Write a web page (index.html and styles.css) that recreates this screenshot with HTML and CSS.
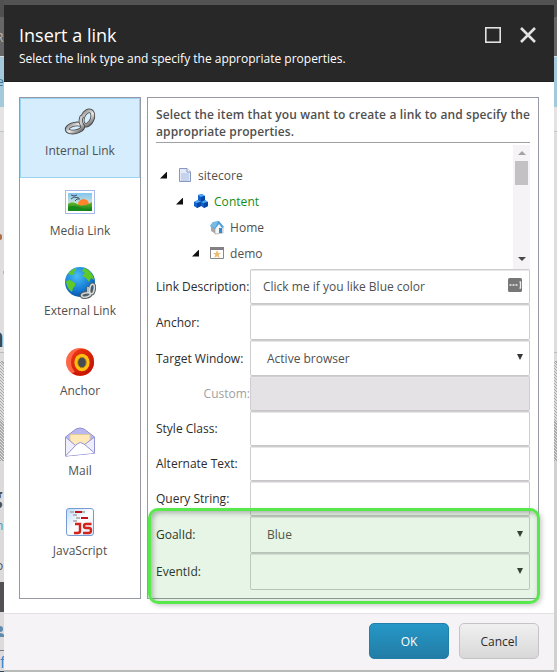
FILE: index.html
```html
<!DOCTYPE html>
<html lang="en">
<head>
<meta charset="utf-8">
<title>Insert a link</title>
<link rel="stylesheet" href="styles.css">
</head>
<body>
<div class="page">
  <div class="edge edge-left">
    <div class="e-top"></div>
    <div class="e-nav"><span>R</span></div>
    <div class="e-blue"><span>e</span></div>
    <div class="e-plain"></div>
    <div class="e-main"><i class="dot"></i><i class="dash"></i><b>n</b></div>
    <div class="e-hatch"></div>
    <div class="e-copy"><b>g</b><span class="lnk">n</span><span>o</span></div>
    <div class="e-dark"></div>
    <div class="e-user"><svg width="6" height="12" viewBox="0 0 6 12"><circle cx="0" cy="3" r="3"/><path d="M0 7Q4 7 4.500 10V11H0Z"/></svg></div>
    <div class="e-foot">f</div>
  </div>

  <div class="dialog">
    <header class="head">
      <div>
        <h1>Insert a link</h1>
        <p>Select the link type and specify the appropriate properties.</p>
      </div>
      <svg class="winbtns" width="52" height="16" viewBox="0 0 52 16" fill="none" stroke="#e2e2e2">
        <rect x=".8" y=".8" width="14.400" height="14.400" stroke-width="1.600"/>
        <path d="M36 1L50 15M50 1L36 15" stroke-width="2.600"/>
      </svg>
    </header>

    <main class="body">
      <nav class="types">
        <div class="type active">
          <svg width="32" height="32" viewBox="0 0 32 32">
            <defs><linearGradient id="steel" x1="0" y1="0" x2="1" y2="1"><stop offset="0" stop-color="#8a8a8a"/><stop offset=".45" stop-color="#ededed"/><stop offset="1" stop-color="#606060"/></linearGradient></defs>
            <g fill="none">
              <ellipse cx="23.500" cy="11" rx="4.800" ry="7.600" transform="rotate(24 23.500 11)" stroke="#444" stroke-width="4.600"/>
              <ellipse cx="23.500" cy="11" rx="4.800" ry="7.600" transform="rotate(24 23.500 11)" stroke="url(#steel)" stroke-width="3"/>
              <ellipse cx="11" cy="21" rx="8" ry="3.800" transform="rotate(-12 11 21)" stroke="#444" stroke-width="4.600"/>
              <ellipse cx="11" cy="21" rx="8" ry="3.800" transform="rotate(-12 11 21)" stroke="url(#steel)" stroke-width="3"/>
              <path d="M18 9Q15.500 14 18 18" stroke="#444" stroke-width="4.200"/><path d="M18 9Q15.500 14 18 18" stroke="#ccc" stroke-width="2.700"/>
            </g>
          </svg>
          <span>Internal Link</span>
        </div>
        <div class="type">
          <svg width="32" height="32" viewBox="0 0 32 32">
            <defs><linearGradient id="sky" x1="0" y1="0" x2="0" y2="1"><stop offset="0" stop-color="#82c5f0"/><stop offset="1" stop-color="#fff3c5"/></linearGradient><linearGradient id="hill" x1="0" y1="0" x2="0" y2="1"><stop offset="0" stop-color="#6bbd31"/><stop offset="1" stop-color="#087c18"/></linearGradient></defs>
            <rect x="1.500" y="3.500" width="29" height="23" fill="#fff" stroke="#a7b9eb"/><rect x="4" y="6" width="24" height="18" fill="url(#sky)"/>
            <circle cx="19.500" cy="17.500" r="5.500" fill="#ff842b"/><path d="M4 17Q8 13 15 18Q20 20 28 15V24H4Z" fill="url(#hill)"/><path d="M4 20Q12 17 23 24H4Z" fill="#168b1c"/>
            <path d="M7 8L10 9L13 8M7 12L10 10L15 11M11 14L13 12L16 12" fill="none" stroke="#405367"/>
          </svg>
          <span>Media Link</span>
        </div>
        <div class="type">
          <svg width="32" height="32" viewBox="0 0 32 32">
            <defs><radialGradient id="sea" cx=".4" cy=".3" r=".75"><stop offset="0" stop-color="#48bdf8"/><stop offset=".65" stop-color="#1479d2"/><stop offset="1" stop-color="#064e9c"/></radialGradient></defs>
            <circle cx="16" cy="15" r="15" fill="url(#sea)"/>
            <path d="M4 7Q8 2 12 1L12 4L9 5L11 7L8 8ZM2 14L6 13L11 16L11 19L9 21L8 25Q3 22 2 14ZM20 1Q26 3 29 9L30 13L27 11L25 15L22 11L18 9L21 6L18 4Z" fill="#5fc927"/>
            <g fill="none" stroke="#555e62" stroke-width="3.600"><ellipse cx="28" cy="22" rx="2.200" ry="4.800" transform="rotate(10 28 22)"/><ellipse cx="22" cy="28" rx="4.400" ry="2" transform="rotate(-10 22 28)"/><path d="M24 20V26"/></g>
            <g fill="none" stroke="#d5d9db" stroke-width="1.600"><ellipse cx="28" cy="22" rx="2.200" ry="4.800" transform="rotate(10 28 22)"/><ellipse cx="22" cy="28" rx="4.400" ry="2" transform="rotate(-10 22 28)"/><path d="M24 20V26"/></g>
          </svg>
          <span>External Link</span>
        </div>
        <div class="type">
          <svg width="32" height="32" viewBox="0 0 32 32">
            <defs><linearGradient id="red" x1="0" y1="0" x2="1" y2="1"><stop offset="0" stop-color="#f03a12"/><stop offset="1" stop-color="#bd0d00"/></linearGradient></defs>
            <circle cx="16" cy="15" r="14" fill="#ff6547"/><path d="M8 26Q15 31 23 27L18 23Z" fill="#c91405"/><ellipse cx="18.500" cy="15" rx="11.500" ry="13" fill="url(#red)"/><ellipse cx="18" cy="15.500" rx="7.600" ry="8.800" fill="#ffbf12"/><ellipse cx="18" cy="15.500" rx="4.200" ry="5.200" fill="#454b50" stroke="#b28618"/>
          </svg>
          <span>Anchor</span>
        </div>
        <div class="type">
          <svg width="32" height="32" viewBox="0 0 32 32" stroke-linejoin="round">
            <path d="M1.500 10L12 2Q16 0 20 2L30.500 10V26L1.500 29Z" fill="#b9b8ef" stroke="#8f8fd0"/><path d="M6 7.500H26V20H6Z" fill="#ffe9b9" stroke="#e4ca97"/><path d="M1.500 10L12 19L16 17L20 18L30.500 10V26L1.500 29Z" fill="#eeeeff" stroke="#9292d3"/><path d="M1.500 29L13 17Q16 14 20 17L30.500 26" fill="#fff" stroke="#9292d3"/>
          </svg>
          <span>Mail</span>
        </div>
        <div class="type">
          <svg width="32" height="32" viewBox="0 0 32 32">
            <defs><linearGradient id="paper" x1="0" y1="0" x2="1" y2="1"><stop offset="0" stop-color="#b9dcff"/><stop offset=".5" stop-color="#fff"/><stop offset="1" stop-color="#d5e6ff"/></linearGradient></defs>
            <rect x="2.500" y="1.500" width="27" height="27" rx="2.500" fill="url(#paper)" stroke="#769bd4"/><path d="M6 5H10M18 5H21M9 8H13M12 11H16M9 14H13" stroke="#b8b8b8" stroke-width="2"/><path d="M11 5H18M17 11H24" stroke="#bf151b" stroke-width="2"/>
            <path d="M11 17H16V24Q16 26 13.500 26H10M27.500 17H22Q20 17 20 19Q20 21 22 21H25Q27 21 27 23.500Q27 26 24.500 26H19" fill="none" stroke="#d42317" stroke-width="2.400"/>
          </svg>
          <span>JavaScript</span>
        </div>
      </nav>

      <section class="panel">
        <h2>Select the item that you want to create a link to and specify the appropriate properties.</h2>
        <div class="treebox">
          <ul class="tree">
            <li><i class="tri"></i>
              <svg width="16" height="16" viewBox="0 0 16 16"><path d="M2.500 1.500H10L13.500 5V14.500H2.500Z" fill="#e2eafa" stroke="#8797bd"/><path d="M10 1.500V5H13.500" fill="#fff" stroke="#8797bd"/><path d="M4 7H12M4 9H12M4 11H12M4 13H12" stroke="#a9bce1"/></svg><span>sitecore</span></li>
            <li class="l2"><i class="tri"></i>
              <svg width="16" height="16" viewBox="0 0 16 16"><path d="M5 2L9 1L12 3V8L8 9L5 7ZM1 9L5 7L8 9V13L4 15L1 13ZM8 9L12 7L15 9V13L11 15L8 13Z" fill="#1261c8"/><path d="M5 2L9 1L12 3L8 4ZM1 9L5 7L8 9L4 10ZM8 9L12 7L15 9L11 10Z" fill="#52a7f6"/><path d="M8 4L12 3V7L8 9ZM4 10L8 9V13L4 15ZM11 10L15 9V13L11 15Z" fill="#0747a4"/></svg><span class="green">Content</span></li>
            <li class="l3"><i class="tri none"></i>
              <svg width="16" height="16" viewBox="0 0 16 16"><path d="M2 7L7 8V15L2 12Z" fill="#aaa"/><path d="M6 8L10 4L14 8V14L6 15Z" fill="#f5f5f5" stroke="#999" stroke-width=".6"/><path d="M1 7L4 3L10 2L15 8L13 9L10 5L6 10Z" fill="#4c9ed8"/><path d="M1 7L4 3L9 3L6 9Z" fill="#79b9e5"/><path d="M10 9H13V14H10Z" fill="#2f8bd7"/></svg><span>Home</span></li>
            <li class="l4"><i class="tri"></i>
              <svg width="16" height="16" viewBox="0 0 16 16"><path d="M1.500 2.500H14.500V13.500H1.500Z" fill="#fff" stroke="#888"/><path d="M1 2H15V5H1Z" fill="#858085"/><path d="M8 5L9.200 8H12L9.700 9.800L10.600 13L8 11.200L5.400 13L6.300 9.800L4 8H6.800Z" fill="#f0bb6c"/></svg><span>demo</span></li>
          </ul>
          <div class="scroll"><i class="up"></i><i class="thumb"></i><i class="down"></i></div>
        </div>
        <div class="form">
          <label>Link Description:</label><div class="field text"><span>Click me if you like Blue color</span><svg width="14" height="14" viewBox="0 0 14 14"><rect width="14" height="14" rx="1.500" fill="#777"/><path d="M1.500 7H3.500M4.500 7H6.500M7.500 7H9.500M11.500 4H13M11.500 10H13M12.500 4V10" stroke="#eee" stroke-width="1.300"/></svg></div>
          <label>Anchor:</label><div class="field"></div>
          <label>Target Window:</label><div class="field select"><span>Active browser</span><i></i></div>
          <label class="custom">Custom:</label><div class="field disabled"></div>
          <label>Style Class:</label><div class="field"></div>
          <label>Alternate Text:</label><div class="field"></div>
          <label>Query String:</label><div class="field"></div>
          <label>GoalId:</label><div class="field select"><span>Blue</span><i></i></div>
          <label>EventId:</label><div class="field select"><span></span><i></i></div>
        </div>
        <div class="highlight"></div>
      </section>
    </main>

    <footer class="foot"><button class="ok">OK</button><button class="cancel">Cancel</button></footer>
  </div>

  <div class="edge edge-right">
    <div class="e-top"></div><div class="e-nav"></div><div class="e-blue"></div><div class="e-plain"></div><div class="e-main"></div><div class="e-hatch"></div><div class="e-rest"></div>
  </div>
</div>
</body>
</html>
```

FILE: styles.css
```css
* { box-sizing: border-box; }
body { margin: 0; font: 12px/17px "Open Sans", sans-serif; color: #505050; background: #d5d3d5; }
.page { display: grid; grid-template-columns: 4px 550px 3px; width: 557px; height: 672px; overflow: hidden; background: linear-gradient(#535353 0 5px, transparent 5px 670px, #b8b9b9 670px); }
h1, h2, p, ul { margin: 0; padding: 0; }

.edge { display: flex; flex-direction: column; height: 672px; overflow: hidden; background: #dcdadb; }
.edge span, .edge b { display: block; width: 12px; }
.e-top { height: 17px; background: #505050; }
.e-nav { height: 39px; background: #666; color: #bbb; padding-top: 12px; }
.edge-left .e-nav span { margin-left: -4px; }
.e-blue { height: 51px; background: #a3cada; border-top: 1px solid #ddd; color: #407b95; padding-top: 16px; }
.edge-left .e-blue span { margin-left: -3px; }
.e-plain { height: 25px; background: #e5e3e4; border-bottom: 1px solid #c4c4c7; }
.e-main { height: 221px; background: #dfdddd; border-bottom: 1px solid #bbb; }
.dot { display: block; width: 2px; height: 6px; margin-top: 102px; border-radius: 0 3px 3px 0; background: #ad6c4a; }
.dash { display: block; height: 3px; width: 1px; margin: 31px 0 0 3px; background: #e2ae50; }
.e-main b { font-size: 26px; line-height: 30px; margin: 48px 0 0 -13px; width: 20px; color: #3b4a57; }
.e-hatch { height: 108px; border-top: 8px solid #dddbdb; background: repeating-linear-gradient(45deg, #aaa 0 1px, #ddd 1px 2.1px); }
.e-copy { height: 121px; padding-top: 21px; }
.e-copy b { font-size: 22px; line-height: 26px; margin-left: -10px; }
.e-copy span { margin: 9px 0 0 -4px; }
.e-copy .lnk { color: #4f94bf; }
.e-copy .lnk + span { margin-top: 23px; }
.e-dark { height: 30px; background: #535153; }
.e-user { height: 39px; padding-top: 14px; border-bottom: 1px solid #778; fill: #5f8bae; }
.e-user svg { display: block; }
.e-foot { height: 21px; color: #3685cf; font-size: 16px; line-height: 23px; border-bottom: 1px solid #345; }
.e-rest { flex: 1; }
.edge-right { background: #d2d1d2; }

.dialog { height: 665px; margin-top: 5px; display: flex; flex-direction: column; background: #fff; }
.head { height: 77px; flex: none; background: #282828; color: #fff; padding: 20px 17px 0 15px; display: flex; justify-content: space-between; border-bottom: 1px solid #202020; }
h1 { font-size: 18px; line-height: 21px; font-weight: 400; }
.head p { font-size: 12px; margin-top: 4px; line-height: 18px; }
.winbtns { margin-top: 2px; }
.body { height: 531px; flex: none; padding: 15px 15px 0 15px; display: flex; gap: 6px; }
.types { width: 122px; height: 502px; border: 1px solid #9899a6; }
.type { height: 80px; padding-top: 9px; display: flex; flex-direction: column; align-items: center; }
.type svg { display: block; height: 32px; }
.type span { margin-top: 3px; line-height: 17px; }
.type.active { background: #d5edfd; outline: 1px solid #9bd2f2; outline-offset: -1px; }

.panel { width: 392px; height: 502px; border: 1px solid #9899a6; padding: 8px 8px 0 8px; position: relative; }
h2 { font-size: 12px; line-height: 17px; font-weight: 600; height: 37px; border-bottom: 1px solid #a09fa3; letter-spacing: .1px; text-align: justify; }
.treebox { height: 126px; display: flex; justify-content: space-between; padding-top: 2px; }
.tree { list-style: none; padding-top: 17px; }
.tree li { height: 26px; display: flex; align-items: center; }
.tree .l2 { padding-left: 16px; }
.tree .l3 { padding-left: 32px; }
.tree .l4 { padding-left: 32px; }
.tri { width: 7px; height: 7px; background: #111; clip-path: polygon(100% 0, 100% 100%, 0 100%); margin: 0 10px 0 4px; }
.tri.none { visibility: hidden; }
.tree span { margin-left: 5px; letter-spacing: .05px; }
.green { color: #168c16; }
.scroll { width: 17px; height: 124px; background: #f6f3f6; display: flex; flex-direction: column; align-items: center; }
.up { border: 4px solid transparent; border-top: 0; border-bottom-color: #a5a2a5; margin-top: 6px; }
.thumb { width: 13px; height: 24px; background: #c4c1c4; margin-top: 6px; }
.down { border: 4px solid transparent; border-bottom: 0; border-top-color: #484648; margin-top: 72px; }

.form { display: grid; grid-template-columns: 94px 280px; grid-template-rows: 35px 36px 36px 35px 35px 35px 35px 37px 37px; color: #2c2c2c; }
.form label { align-self: center; white-space: nowrap; }
.form .custom { color: #a2a0a2; text-align: right; }
.field { border: 1px solid #cfcdcf; border-bottom-color: #c8c6c8; box-shadow: inset 0 1px #e8e7e8; border-radius: 2px; background: #fff; display: flex; align-items: center; justify-content: space-between; color: #505050; }
.text { padding: 0 7px 0 12px; }
.text svg { margin-top: -3px; }
.select { padding: 0 6px 0 16px; }
.select i { border: 3.500px solid transparent; border-top: 6px solid #373737; border-bottom: 0; margin-top: -2px; }
.disabled { background: #e5e2e5; }
.highlight { position: absolute; left: 0; top: 410px; width: 392px; height: 96px; border: 3px solid #57e84b; border-radius: 10px; background: rgba(40, 160, 30, .11); box-shadow: 2px 2px 4px #9997, inset 2px 2px 5px #6667; }

.foot { flex: 1; border-top: 1px solid #e4e1e4; background: #f6f3f6; display: flex; justify-content: flex-end; gap: 10px; padding: 9px 15px 0 0; }
button { width: 80px; height: 36px; border-radius: 5px; font: 12px "Open Sans", sans-serif; padding: 0; }
.ok { color: #fff; border: 1px solid #217fa8; background: linear-gradient(#2697c7, #227da5); }
.cancel { color: #2c2c2c; border: 1px solid #c5c3c5; background: linear-gradient(#f0f0f0, #d9d8d9); }
```
